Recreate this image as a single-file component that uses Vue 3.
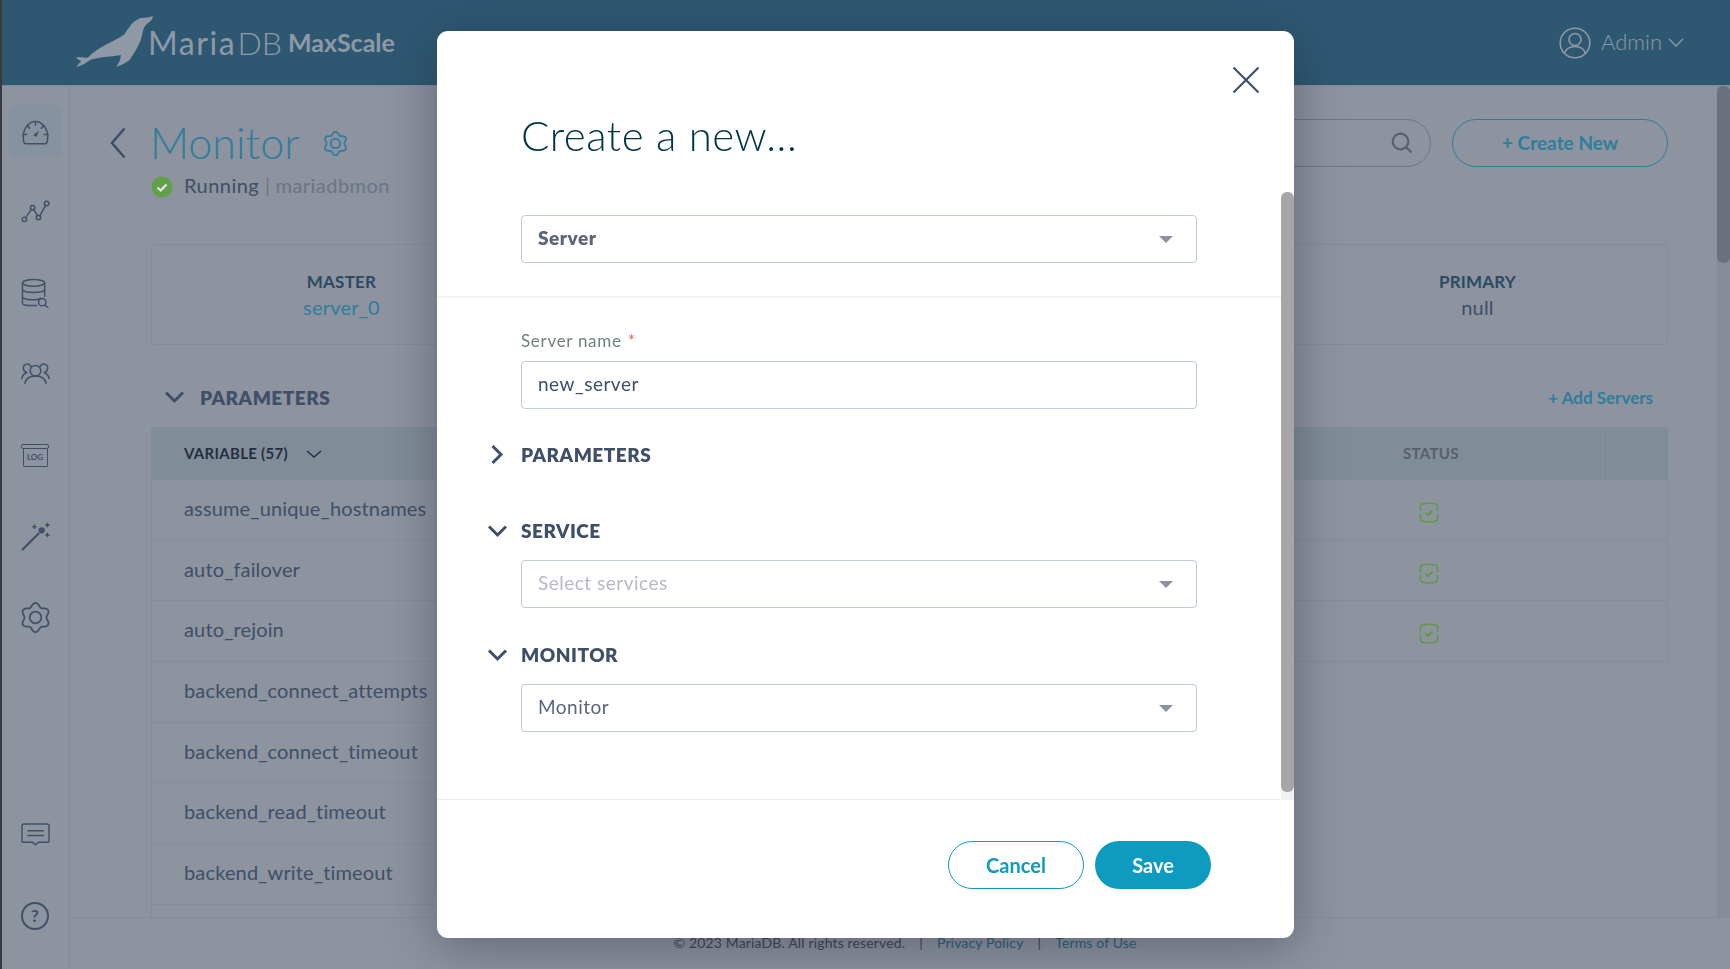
<template>
  <div class="page">
    <header class="topbar">
      <div class="logo">
        <svg class="seal" viewBox="40 45 245 165">
          <path d="M48 176C60 172 72 177 84 176C112 146 160 128 192 108C206 88 220 62 244 57C256 55 268 57 279 51C279 60 272 68 262 74C254 80 250 88 248 102C244 130 226 158 210 182C198 192 184 198 169 204C176 192 184 180 183 168C160 173 122 173 92 182C78 192 66 200 50 204C54 196 60 192 64 186C58 182 54 180 48 176Z" />
        </svg>
        <span class="logo-maria">Maria</span><span class="logo-db">DB</span>
        <span class="logo-max">MaxScale</span>
      </div>
      <div class="user">
        <svg class="user-icon" viewBox="0 0 32 32" fill="none">
          <circle cx="16" cy="16" r="14.8" />
          <circle cx="16" cy="12.5" r="6" />
          <path d="M5.5 26.5C7 21.5 11 19.5 16 19.5S25 21.5 26.5 26.5" />
        </svg>
        <span class="user-name">Admin</span>
        <svg class="user-caret" viewBox="0 0 16 9" fill="none"><path d="M1 1l7 7 7-7" /></svg>
      </div>
    </header>

    <div class="main">
      <nav class="sidebar">
        <a class="nav-item active">
          <svg viewBox="0 0 30 26" class="nav-icon">
            <path d="M5 24.5h20c1.500 0 2-1 2.300-2.500C29.500 10 22 1.500 15 1.500S.5 10 2.700 22C3 23.500 3.500 24.500 5 24.500Z" />
            <path d="M15 1.500v4M6.500 5.500l2.500 3M23.500 5.500l-2.500 3M2 15h4M24 15h4" />
            <path d="M12.500 15.500l6-4.500-2.500 6.500Z" class="solid" />
          </svg>
        </a>
        <a class="nav-item">
          <svg viewBox="0 0 30 24" class="nav-icon">
            <path d="M4.500 18.500L11 9.500M13 9.500l4 7M19.500 16.500L25.500 5.500" />
            <circle cx="3.500" cy="20" r="2.300" /><circle cx="12" cy="8" r="2.300" /><circle cx="18" cy="18" r="2.300" /><circle cx="26.500" cy="3.500" r="2.300" />
          </svg>
        </a>
        <a class="nav-item">
          <svg viewBox="0 0 30 32" class="nav-icon">
            <ellipse cx="13" cy="5" rx="11.500" ry="3.500" />
            <path d="M1.500 5v21c0 2 3 2.500 6 2.500h9M24.500 5v14M1.500 12c2 4 21 4 23 0M1.500 19.500c2 3.500 15 4 19 1.500" />
            <circle cx="22" cy="25" r="3.800" /><path d="M25 28l3.500 3.500" />
          </svg>
        </a>
        <a class="nav-item">
          <svg viewBox="0 0 30 22" class="nav-icon">
            <circle cx="15" cy="8" r="5.500" />
            <path d="M4 21c1-5 5-7.500 11-7.500S25 16 26 21" />
            <path d="M10.500 4C9.500 2 8 1 6.500 1 3.500 1 2 3.500 2.500 6c.3 2 1.500 3.200 3.500 3.800C3 11 1.500 13 .8 16" />
            <path d="M19.500 4c1-2 2.500-3 4-3 3 0 4.500 2.500 4 5-.3 2-1.500 3.200-3.500 3.800 3 1.200 4.500 3.200 5.200 6.200" />
          </svg>
        </a>
        <a class="nav-item">
          <div class="log-icon">
            <span class="log-lid"></span>
            <span class="log-box">LOG</span>
          </div>
        </a>
        <a class="nav-item">
          <svg viewBox="0 0 28 28" class="nav-icon wand">
            <path d="M1.500 26.500L17 11" class="thick" />
            <circle cx="20" cy="8" r="3" class="solid" />
            <path d="M13 3v3M11.500 4.500h3M25.500 1.500v3M24 3h3M25.500 11v3M24 12.500h3" />
          </svg>
        </a>
        <a class="nav-item">
          <svg viewBox="0 0 32 32" class="nav-icon gear"><path :d="gearPath" /><circle cx="16" cy="16" r="6" /></svg>
        </a>
        <div class="nav-spacer"></div>
        <a class="nav-item bottom">
          <svg viewBox="0 0 30 24" class="nav-icon">
            <path d="M3 1h24c1.200 0 2 .8 2 2v15c0 1.200-.8 2-2 2h-9l-3 2.500-3-2.500H3c-1.200 0-2-.8-2-2V3c0-1.200.8-2 2-2Z" />
            <path d="M7 8h16M7 13h16" />
          </svg>
        </a>
        <a class="nav-item bottom">
          <div class="help-icon">?</div>
        </a>
      </nav>

      <div class="content">
        <div class="upper">
          <div class="scroll-area">
            <div class="title-row">
              <svg class="back" viewBox="0 0 16 32" fill="none"><path d="M14.500 1.500L2 16l12.500 14.500" /></svg>
              <h1 class="page-title">Monitor</h1>
              <svg class="title-gear" viewBox="0 0 32 32" fill="none"><path :d="gearPath" /><circle cx="16" cy="16" r="6" /></svg>
              <div class="title-spacer"></div>
              <div class="search">
                <svg viewBox="0 0 22 22" fill="none"><circle cx="9.500" cy="9.500" r="7.800" /><path d="M15 15l5.500 5.500" /></svg>
              </div>
              <button class="create-btn">+ Create New</button>
            </div>

            <div class="page-body">
              <div class="status-line">
                <svg class="status-dot" viewBox="0 0 22 22">
                  <circle cx="11" cy="11" r="10.500" fill="#64a04a" />
                  <path d="M6.500 11.500l3.200 3 5.800-6" fill="none" stroke="#e4e8ea" stroke-width="2.200" />
                </svg>
                <span class="status-text">Running</span>
                <span class="status-sep">|</span>
                <span class="status-mod">mariadbmon</span>
              </div>

              <div class="summary-card">
                <div class="summary-cell">
                  <div class="summary-label">MASTER</div>
                  <div class="summary-value link">server_0</div>
                </div>
                <div class="summary-cell">
                  <div class="summary-label">PRIMARY</div>
                  <div class="summary-value">null</div>
                </div>
              </div>

              <div class="section-row">
                <svg class="section-chevron" viewBox="0 0 21 14" fill="none"><path d="M2 2.500l8.500 8.500L19 2.500" /></svg>
                <span class="section-name">PARAMETERS</span>
                <a class="add-link">+ Add Servers</a>
              </div>

              <div class="table">
                <div class="table-head">
                  <div class="head-name">
                    VARIABLE (57)
                    <svg viewBox="0 0 16 8" fill="none"><path d="M1 1l7 6 7-6" /></svg>
                  </div>
                  <div class="head-status">STATUS</div>
                  <div class="head-last"></div>
                </div>
                <div v-for="row in rows" :key="row.name" class="table-row" :class="{ short: !row.ok }">
                  <div class="cell-name">{{ row.name }}</div>
                  <div v-if="row.ok" class="cell-status">
                    <svg viewBox="0 0 20 21" fill="none">
                      <path d="M1.500 9V4.500c0-1.500.8-2.400 2.300-2.700 4-.8 8.400-.8 12.400 0 1.500.3 2.300 1.200 2.300 2.700V9M18.500 12v4.500c0 1.500-.8 2.400-2.300 2.700-4 .8-8.400.8-12.400 0-1.500-.3-2.300-1.200-2.300-2.700V12" />
                      <path d="M6.500 10.500l2.500 2.500 4.500-4.500" class="tick" />
                    </svg>
                  </div>
                  <div v-if="row.ok" class="cell-last"></div>
                </div>
                <div class="table-row short"></div>
              </div>
            </div>
          </div>
          <div class="page-scrollbar"><div class="page-thumb"></div></div>
        </div>
        <footer class="footer">
          <span>© 2023 MariaDB. All rights reserved.</span>
          <span class="footer-sep">|</span>
          <a>Privacy Policy</a>
          <span class="footer-sep">|</span>
          <a>Terms of Use</a>
        </footer>
      </div>
    </div>

    <div class="overlay">
      <div class="modal">
        <svg class="close" viewBox="0 0 28 28" fill="none"><path d="M1.500 1.500l25 25M26.500 1.500l-25 25" /></svg>
        <div class="modal-scrollbar"><div class="modal-thumb"></div></div>

        <div class="modal-head">
          <h2 class="modal-title">Create a new...</h2>
          <div class="field select">
            <span class="strong">Server</span>
            <i class="arrow"></i>
          </div>
        </div>

        <div class="modal-body">
          <label class="field-label">Server name <em>*</em></label>
          <div class="field">
            <span>{{ serverName }}</span>
          </div>

          <div class="group-title first">
            <svg viewBox="0 0 21 21" fill="none"><path d="M5.500 2l8.500 8.500L5.500 19" /></svg>
            PARAMETERS
          </div>

          <div class="group-title">
            <svg viewBox="0 0 21 21" fill="none"><path d="M2 6.500l8.500 8.500L19 6.500" /></svg>
            SERVICE
          </div>
          <div class="field select">
            <span class="placeholder">Select services</span>
            <i class="arrow"></i>
          </div>

          <div class="group-title">
            <svg viewBox="0 0 21 21" fill="none"><path d="M2 6.500l8.500 8.500L19 6.500" /></svg>
            MONITOR
          </div>
          <div class="field select">
            <span class="monitor-val">Monitor</span>
            <i class="arrow"></i>
          </div>
        </div>

        <div class="modal-foot">
          <button class="btn outline">Cancel</button>
          <button class="btn primary">Save</button>
        </div>
      </div>
    </div>
  </div>
</template>

<script setup>
import { ref } from "vue";

const serverName = ref("new_server")

const rows = [
  { name: "assume_unique_hostnames", ok: true },
  { name: "auto_failover", ok: true },
  { name: "auto_rejoin", ok: true },
  { name: "backend_connect_attempts", ok: false },
  { name: "backend_connect_timeout", ok: false },
  { name: "backend_read_timeout", ok: false },
  { name: "backend_write_timeout", ok: false },
]

// six lobed cog outline, used in the sidebar and next to the title
const makeGear = () => {
  let d = ""
  for (let i = 0; i < 96; i++) {
    const a = (i / 96) * Math.PI * 2
    const r = 13.2 + 1.9 * Math.cos(a * 6)
    const x = (16 + r * Math.sin(a)).toFixed(2)
    const y = (16 - r * Math.cos(a)).toFixed(2)
    d += (i ? "L" : "M") + x + " " + y
  }
  return d + "Z"
}
const gearPath = makeGear()
</script>

<style>
html, body {
  margin: 0;
  height: 100%;
  overflow: hidden;
}
</style>

<style scoped>
.page {
  height: 100vh;
  display: flex;
  flex-direction: column;
  border-left: 2px solid #3b3b3f;
  background: #8d939f;
  color: #3f4f68;
  font-family: Lato, "Noto Sans", sans-serif;
  box-sizing: border-box;
}
.topbar {
  height: 86px;
  flex-shrink: 0;
  background: #2e5872;
  display: flex;
  align-items: center;
  justify-content: space-between;
  border-bottom: 1px solid #7f8d9c;
  box-sizing: border-box;
  color: #8f99a6;
}
.logo {
  display: flex;
  align-items: center;
  margin-left: 71px;
}
.seal {
  width: 82px;
  height: 55px;
  fill: #8f99a6;
  margin-top: -2px;
}
.logo-maria {
  font-size: 32px;
  letter-spacing: 1.6px;
  margin-left: -7px;
}
.logo-db {
  font-size: 32px;
  font-weight: 300;
  margin-left: 1px;
}
.logo-max {
  font-size: 25px;
  font-weight: 700;
  margin-left: 6px;
  margin-top: -2px;
}
.user {
  display: flex;
  align-items: center;
  font-size: 22px;
  font-weight: 300;
  margin-right: 46px;
}
.user-name {
  margin-top: -3px;
}
.user-icon {
  width: 32px;
  height: 32px;
  margin-right: 10px;
  stroke: #8f99a6;
  stroke-width: 1.6;
}
.user-caret {
  width: 16px;
  height: 9px;
  margin-left: 6px;
  stroke: #8f99a6;
  stroke-width: 1.4;
}

.main {
  flex: 1;
  display: flex;
  min-height: 0;
}
.sidebar {
  width: 66px;
  flex-shrink: 0;
  border-right: 2px solid #868c99;
  box-sizing: content-box;
  display: flex;
  flex-direction: column;
  align-items: center;
  padding-top: 18px;
  padding-bottom: 26px;
}
.nav-item {
  width: 54px;
  height: 54px;
  margin-bottom: 27px;
  border-radius: 9px;
  display: flex;
  align-items: center;
  justify-content: center;
  flex-shrink: 0;
}
.nav-item.active {
  background: #86929f;
}
.nav-item.active svg {
  margin-top: 3px;
}
.nav-item.bottom:last-child {
  margin-bottom: 0;
}
.nav-spacer {
  flex: 1;
}
.nav-icon {
  width: 29px;
  height: auto;
  fill: none;
  stroke: #3f5068;
  stroke-width: 1.500;
  stroke-linecap: round;
  stroke-linejoin: round;
}
.nav-icon .solid {
  fill: #3f5068;
  stroke: none;
}
.nav-icon .thick {
  stroke-width: 2;
}
.gear {
  width: 31px;
  stroke-width: 1.800;
}
.log-icon {
  width: 28px;
  display: flex;
  flex-direction: column;
  align-items: center;
}
.log-lid {
  width: 28px;
  height: 5px;
  border: 1.500px solid #3f5068;
  border-radius: 2px;
  box-sizing: border-box;
}
.log-box {
  width: 25px;
  height: 18px;
  border: 1.500px solid #3f5068;
  border-top: none;
  border-radius: 0 0 2px 2px;
  box-sizing: border-box;
  font-size: 8px;
  font-weight: 700;
  line-height: 16px;
  text-align: center;
  color: #3f5068;
}
.help-icon {
  width: 28px;
  height: 28px;
  border: 2px solid #3f5068;
  border-radius: 50%;
  box-sizing: border-box;
  font-size: 17px;
  font-weight: 700;
  line-height: 24px;
  text-align: center;
  color: #3f5068;
}

.content {
  flex: 1;
  min-width: 0;
  display: flex;
  flex-direction: column;
}
.upper {
  height: 831px;
  flex-shrink: 0;
  display: flex;
}
.scroll-area {
  flex: 1;
  min-width: 0;
  overflow: hidden;
  padding: 33px 49px 0 40px;
  box-sizing: border-box;
}
.title-row {
  display: flex;
  align-items: center;
  height: 48px;
}
.back {
  width: 16px;
  height: 32px;
  stroke: #3f4f68;
  stroke-width: 2.500;
  margin-right: 24px;
}
.page-title {
  margin: 0;
  font-size: 43px;
  font-weight: 300;
  color: #2f7d9c;
  line-height: 48px;
}
.title-gear {
  width: 25px;
  height: 25px;
  margin-left: 24px;
  stroke: #2f7d9c;
  stroke-width: 2.200;
}
.title-spacer {
  flex: 1;
}
.search {
  width: 350px;
  height: 48px;
  border: 1px solid #6c7686;
  border-radius: 24px;
  box-sizing: border-box;
  display: flex;
  align-items: center;
  justify-content: flex-end;
  padding-right: 17px;
}
.search svg {
  width: 22px;
  height: 22px;
  stroke: #5a606d;
  stroke-width: 2.200;
}
.create-btn {
  width: 216px;
  height: 48px;
  margin-left: 21px;
  padding-bottom: 3px;
  background: none;
  border: 1px solid #2f7d9c;
  border-radius: 24px;
  color: #2f7d9c;
  font-family: inherit;
  font-size: 19px;
  font-weight: 700;
}
.page-body {
  margin-left: 41px;
}
.status-line {
  display: flex;
  align-items: center;
  height: 21px;
  margin-top: 9px;
  font-size: 20px;
  letter-spacing: 0.45px;
}
.status-line span {
  margin-top: -3px;
}
.status-dot {
  width: 22px;
  height: 22px;
  margin-right: 11px;
}
.status-sep {
  margin: 0 5px 0 6px;
  color: #6c7586;
}
.status-mod {
  color: #6c7586;
}
.summary-card {
  display: flex;
  justify-content: space-between;
  height: 101px;
  margin-top: 47px;
  border: 1px solid #858b98;
  border-radius: 4px;
  box-sizing: border-box;
}
.summary-cell {
  width: 379px;
  text-align: center;
  padding-top: 26px;
}
.summary-label {
  font-size: 17px;
  font-weight: 700;
  letter-spacing: 0.2px;
  line-height: 22px;
  color: #2b4a63;
}
.summary-value {
  font-size: 20px;
  letter-spacing: 0.2px;
  line-height: 26px;
  margin-top: 1px;
}
.summary-value.link {
  color: #2f7d9c;
}
.section-row {
  display: flex;
  align-items: center;
  height: 24px;
  margin-top: 41px;
  padding: 0 15px 2px 13px;
  box-sizing: border-box;
}
.section-chevron {
  width: 21px;
  height: 14px;
  stroke: #3f4f68;
  stroke-width: 3;
  margin-right: 15px;
}
.section-name {
  flex: 1;
  font-size: 19px;
  font-weight: 800;
  letter-spacing: 0.5px;
}
.add-link {
  font-size: 17px;
  font-weight: 700;
  color: #2f7d9c;
}
.table-head {
  display: flex;
  align-items: center;
  height: 53px;
  margin-top: 17px;
  background: #818c99;
  border-radius: 4px 4px 0 0;
  font-size: 15px;
  font-weight: 700;
  letter-spacing: 0.3px;
}
.head-name {
  flex: 1;
  padding: 0 0 2px 33px;
  color: #252f42;
  display: flex;
  align-items: center;
}
.head-name svg {
  width: 16px;
  height: 8px;
  margin: 2px 0 0 18px;
  stroke: #252f42;
  stroke-width: 1.400;
}
.head-status {
  width: 199px;
  padding-bottom: 2px;
  color: #555f6c;
}
.head-last {
  width: 66px;
  height: 100%;
  border-left: 1px solid #86919d;
  box-sizing: border-box;
}
.table-row {
  display: flex;
  align-items: center;
  height: 60.700px;
  padding-bottom: 4px;
  border: 1px solid #868c99;
  border-top: none;
  box-sizing: border-box;
  font-size: 20px;
  letter-spacing: 0.15px;
}
.table-row.short {
  width: 500px;
  border-right: none;
}
.cell-name {
  flex: 1;
  padding-left: 32px;
}
.cell-status {
  width: 199px;
  padding-left: 16px;
  box-sizing: border-box;
  display: flex;
  margin-top: 9px;
}
.cell-status svg {
  width: 20px;
  height: 21px;
  stroke: #5e9a46;
  stroke-width: 1.500;
}
.cell-status .tick {
  stroke-width: 2;
}
.cell-last {
  width: 65px;
}
.footer {
  flex: 1;
  border-top: 1px solid #858b98;
  display: flex;
  justify-content: center;
  padding: 16px 0 0 10px;
  box-sizing: border-box;
  font-size: 14px;
  letter-spacing: 0.15px;
  color: #3f4452;
}
.footer a {
  color: #2a5f7c;
}
.footer-sep {
  margin: 0 14px;
}
.page-scrollbar {
  width: 13px;
  flex-shrink: 0;
  background: #878c98;
}
.page-thumb {
  height: 177px;
  background: #6b707c;
  border-radius: 6px;
}

.overlay {
  position: fixed;
  inset: 0;
  display: flex;
  align-items: center;
  justify-content: center;
}
.modal {
  position: relative;
  width: 857px;
  height: 907px;
  margin-left: 1px;
  background: #fff;
  border-radius: 11px;
  box-shadow: 0 8px 50px rgba(30, 34, 48, 0.4);
  display: flex;
  flex-direction: column;
  overflow: hidden;
}
.close {
  position: absolute;
  top: 35px;
  right: 34px;
  width: 28px;
  height: 28px;
  stroke: #3f4f68;
  stroke-width: 2.200;
}
.modal-scrollbar {
  position: absolute;
  top: 161px;
  right: 0;
  width: 13px;
  height: 608px;
  background: linear-gradient(#fff 98%, #f1f2f3 98%);
}
.modal-thumb {
  height: 600px;
  background: #a8a5a8;
  border-radius: 6px;
}
.modal-head {
  padding: 80px 97px 33px 84px;
  border-bottom: 2px solid #f1f3f5;
}
.modal-title {
  margin: 0 0 56px;
  font-size: 42px;
  font-weight: 300;
  letter-spacing: 0.5px;
  line-height: 48px;
  color: #003545;
}
.field {
  height: 48px;
  border: 1px solid #bccdd5;
  border-radius: 4px;
  box-sizing: border-box;
  display: flex;
  align-items: center;
  justify-content: space-between;
  padding: 0 23px 3px 16px;
  font-size: 19px;
  letter-spacing: 0.5px;
  color: #3f4f68;
}
.arrow {
  margin-top: 3px;
  width: 0;
  height: 0;
  border-left: 7px solid transparent;
  border-right: 7px solid transparent;
  border-top: 7px solid #8c92a0;
}
.strong {
  font-weight: 800;
  color: #5b6679;
}
.placeholder {
  color: #b5bac4;
}
.monitor-val {
  color: #59657a;
}
.modal-body {
  flex: 1;
  padding: 33px 97px 0 84px;
  border-bottom: 1px solid #e8eef1;
}
.field-label {
  display: block;
  font-size: 17px;
  line-height: 20px;
  letter-spacing: 0.7px;
  color: #6f7f7f;
  margin-bottom: 10px;
}
.field-label em {
  color: #ef5c5c;
  font-style: normal;
  margin-left: 1px;
}
.group-title {
  display: flex;
  align-items: center;
  height: 24px;
  margin: 36px 0 16px -34px;
  padding-bottom: 3px;
  box-sizing: border-box;
  font-size: 19px;
  font-weight: 800;
  letter-spacing: 0.5px;
  color: #3f4f68;
}
.group-title.first {
  margin-top: 35px;
  margin-bottom: 52px;
}
.group-title svg {
  width: 21px;
  height: 21px;
  margin-right: 13px;
  stroke: #3f4f68;
  stroke-width: 3;
}
.modal-foot {
  display: flex;
  justify-content: flex-end;
  gap: 11px;
  padding: 41px 83px 49px 0;
}
.btn {
  height: 48px;
  padding-bottom: 1px;
  border-radius: 24px;
  font-family: inherit;
  font-size: 20px;
  font-weight: 700;
}
.btn.outline {
  width: 136px;
  background: #fff;
  border: 1px solid #0e9bc0;
  color: #0e9bc0;
}
.btn.primary {
  width: 116px;
  background: #0e9bc0;
  border: none;
  color: #fff;
}
</style>
